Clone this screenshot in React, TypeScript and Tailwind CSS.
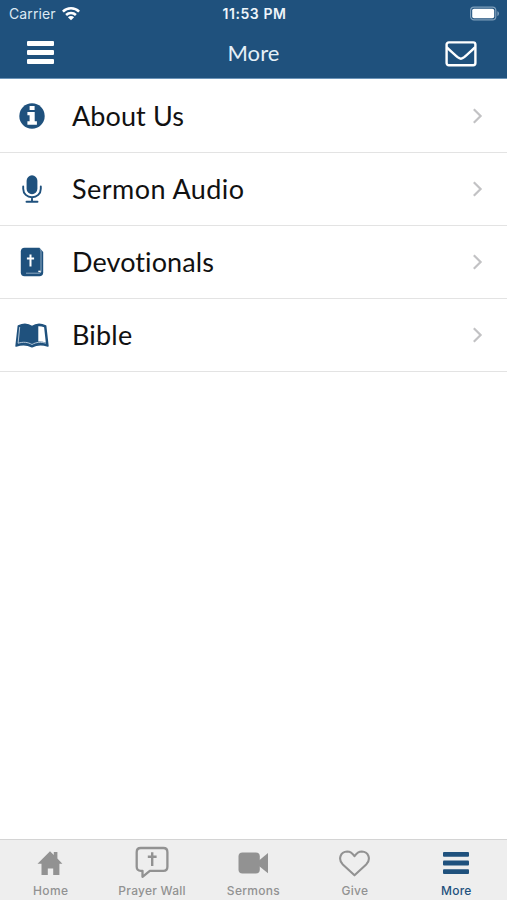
import type { ReactNode } from 'react';

interface MenuItem {
  label: string;
  icon: ReactNode;
  labelClass: string;
}

interface TabItem {
  label: string;
  icon: ReactNode;
  labelClass: string;
  active?: boolean;
}

const WifiIcon = () => (
  <svg width="20" height="16" viewBox="0 0 20 16" fill="none" stroke="currentColor" strokeWidth="2.5">
    <path d="M1.9 5.6a11.4 11.4 0 0 1 16.2 0" />
    <path d="M5.1 9a6.9 6.9 0 0 1 9.8 0" />
    <path d="M10 14.2 6.9 11.2a4.4 4.4 0 0 1 6.2 0Z" fill="currentColor" stroke="none" />
  </svg>
);

const BatteryIcon = () => (
  <svg width="31" height="16" viewBox="0 0 31 16" fill="none">
    <rect x="1.6" y="1.2" width="25.2" height="12.6" rx="3.4" stroke="#7f9fbb" strokeWidth="1.2" />
    <rect x="3.2" y="2.8" width="22" height="9.4" rx="1.8" fill="#fff" />
    <path d="M28.4 5.2c2.1.7 2.1 4 0 4.8Z" fill="#7f9fbb" />
  </svg>
);

const MailIcon = () => (
  <svg width="32" height="26" viewBox="0 0 32 26" fill="none" stroke="currentColor" strokeWidth="2.4" strokeLinejoin="round">
    <rect x="1.6" y="1.4" width="28.8" height="22.8" rx="2.2" />
    <path d="M1.6 6.2c3.5 3.6 7.5 6.8 11 10 2.3 2 4.3 2 6.6 0 3.5-3.2 7.5-6.4 11-10" />
  </svg>
);

const BarsIcon = ({ className }: { className: string }) => (
  <svg className={className} viewBox="0 0 27 23" preserveAspectRatio="none" fill="currentColor">
    <rect width="27" height="5" rx="1" />
    <rect y="9" width="27" height="5" rx="1" />
    <rect y="18" width="27" height="5" rx="1" />
  </svg>
);

const InfoIcon = () => (
  <svg width="26" height="26" viewBox="0 0 26 26">
    <circle cx="13" cy="13" r="12.7" fill="currentColor" />
    <path d="M10.6 3.1h5v4h-5zM8.4 9h7.3v9.2h2.2v3.5H8.4v-3.5h2.2v-5.9H8.4z" fill="#fff" />
  </svg>
);

const MicIcon = () => (
  <svg width="20" height="28" viewBox="0 0 20 28" fill="none" stroke="currentColor" strokeWidth="1.9" strokeLinecap="round">
    <rect x="4.6" y=".3" width="10.8" height="18.9" rx="5.4" fill="currentColor" stroke="none" />
    <path d="M1.2 11.5v2.3c0 5 3.9 8.5 8.8 8.5s8.8-3.5 8.8-8.5v-2.3M10 22.5v4.3M4.5 26.8h11" />
  </svg>
);

const HolyBookIcon = () => (
  <svg width="24" height="30" viewBox="0 0 24 30">
    <path d="M4.5.8h15l3.7 4.2v20.7c0 2.2-1.5 3.6-3.7 3.6h-15C2 29.3.8 27.7.8 25.5V4.5C.8 2.2 2.200.8 4.5.8Z" fill="currentColor" />
    <path d="M19.8 2.2c1 .6 1.2 1.4 1.2 2.8v18.5c0 1.9-.5 2.7-2 2.7H6" fill="none" stroke="#a9c0d4" strokeWidth=".8" />
    <path d="M18.3 24.4h2.4" stroke="#fff" strokeWidth="1.5" />
    <path d="M10.5 7.6v12M6.9 11.500h7.200" stroke="#fff" strokeWidth="2" />
  </svg>
);

const OpenBookIcon = () => (
  <svg width="34" height="25" viewBox="0 0 34 25" strokeLinejoin="round">
    <path
      d="M3.4 2.9C8 .7 13.2.9 17 3.7 20.8.9 26 .7 30.6 2.9L32.9 23c-5.8-1.9-11-1.7-15.9.7-4.9-2.4-10.1-2.6-15.9-.7Z"
      fill="currentColor"
      stroke="currentColor"
      strokeWidth="1.6"
    />
    <path d="M23.3 3.3c2-.1 4 .2 5.8.9l1.7 15.3c-2.4-.8-4.9-1.1-7.5-.9Z" fill="#fff" />
    <path
      d="M4.700 4 3.100 20.200c5-1.500 9.600-1.200 13.900 1.300 4.300-2.500 8.900-2.800 13.900-1.300"
      fill="none"
      stroke="#c3d3e1"
      strokeWidth=".9"
    />
  </svg>
);

const HomeIcon = () => (
  <svg width="28" height="26" viewBox="0 0 28 26" fill="currentColor">
    <path d="M13 1.2 16.8 5V2.1h3.6v6.5L25.400 13.700h-3V25h-6.200v-6.500h-5.400V25H4.500V13.700h-4Z" />
  </svg>
);

const PrayerIcon = () => (
  <svg width="34" height="34" viewBox="0 0 34 34" fill="none" stroke="currentColor" strokeLinejoin="round">
    <path d="M5.7 2h22.7c2.700 0 4 1.600 4 4.200v14.500c0 2.600-1.300 4.100-4 4.100H14.800l-7.300 6v-6H5.700c-2.600 0-4-1.500-4-4.100V6.200C1.700 3.600 3.100 2 5.700 2Z" strokeWidth="2.300" />
    <path d="M17.200 6.300v13.700M12.800 10.800h8.800" strokeWidth="2.400" />
  </svg>
);

const VideoIcon = () => (
  <svg width="31" height="22" viewBox="0 0 31 22" fill="currentColor">
    <rect x=".5" y=".5" width="21.3" height="21" rx="4" />
    <path d="M21 8.500 30 1v20.300l-9-7.200Z" />
  </svg>
);

const HeartIcon = () => (
  <svg width="31" height="27" viewBox="0 0 31 27" fill="none" stroke="currentColor" strokeWidth="2.1" strokeLinejoin="round">
    <path d="M15.500 25.300 3.800 14.500C-1.200 9.500 1.300 1.700 8.200 1.500c3.300 0 5.500 2 7.300 4.700 1.800-2.700 4-4.700 7.300-4.700 6.900.2 9.400 8 4.400 13Z" />
  </svg>
);

const ChevronIcon = () => (
  <svg width="11" height="16" viewBox="0 0 11 16" fill="none" stroke="#c2c2c4" strokeWidth="2.2">
    <path d="m1.800 1.200 6.800 6.800-6.800 6.800" />
  </svg>
);

const menuItems: MenuItem[] = [
  { label: 'About Us', icon: <InfoIcon />, labelClass: 'tracking-[0.1px]' },
  { label: 'Sermon Audio', icon: <MicIcon />, labelClass: 'tracking-[0.45px]' },
  { label: 'Devotionals', icon: <HolyBookIcon />, labelClass: 'tracking-[0.1px]' },
  { label: 'Bible', icon: <OpenBookIcon />, labelClass: 'tracking-[0.2px]' },
];

const tabs: TabItem[] = [
  { label: 'Home', icon: <HomeIcon />, labelClass: 'tracking-[0.4px]' },
  { label: 'Prayer Wall', icon: <PrayerIcon />, labelClass: 'tracking-[0.25px]' },
  { label: 'Sermons', icon: <VideoIcon />, labelClass: 'tracking-[0.3px]' },
  { label: 'Give', icon: <HeartIcon />, labelClass: 'tracking-[0.3px]' },
  { label: 'More', icon: <BarsIcon className="h-[22px] w-[26px]" />, labelClass: 'tracking-[0.2px]', active: true },
];

export default function App() {
  return (
    <div className="flex h-[900px] w-[507px] flex-col overflow-hidden bg-white">
      <header className="h-[79px] shrink-0 border-b border-[#6c94b8] bg-[#1f517d] text-white">
        {/* Status bar */}
        <div className="grid h-[27px] grid-cols-3 items-center pl-[9px] pr-[7px] font-['Inter',sans-serif] text-[14px]">
          <div className="flex items-center gap-[5px] text-[#dce9f3]">
            <span className="tracking-[0.1px]">Carrier</span>
            <span className="text-white">
              <WifiIcon />
            </span>
          </div>
          <div className="text-center text-[14px] font-semibold tracking-[0.55px] text-[#eef5fa]">11:53 PM</div>
          <div className="flex justify-end">
            <BatteryIcon />
          </div>
        </div>

        {/* Nav bar */}
        <div className="grid h-[51px] grid-cols-3 items-center px-[29px]">
          <button aria-label="Open menu" className="-ml-0.5">
            <BarsIcon className="h-[23px] w-[27px]" />
          </button>
          <h1 className="text-center font-['Lato',sans-serif] text-[22px] leading-7 tracking-[0.1px] text-[#e5f0f8]">More</h1>
          <button aria-label="Messages" className="flex justify-end pt-0.5 pr-px">
            <MailIcon />
          </button>
        </div>
      </header>

      <main className="grow pt-px">
        {menuItems.map((item) => (
          <a key={item.label} href="#" className="flex h-[73px] items-center border-b border-[#e3e3e3] pr-[24px]">
            <span className="flex w-16 shrink-0 justify-center text-[#1f517d]">{item.icon}</span>
            <span className={`ml-2 grow font-['Lato',sans-serif] text-[27px] text-[#111] ${item.labelClass}`}>{item.label}</span>
            <ChevronIcon />
          </a>
        ))}
      </main>

      <nav className="grid h-[61px] shrink-0 grid-cols-5 border-t border-[#d4d4d4] bg-[#eeeeee]">
        {tabs.map((tab) => (
          <a
            key={tab.label}
            href="#"
            className={`flex flex-col items-center ${tab.active ? 'text-[#1f517d]' : 'text-[#929292]'}`}
          >
            <span className="flex h-[46px] items-center">{tab.icon}</span>
            <span className={`font-['Inter',sans-serif] text-[12px] font-medium leading-[10px] whitespace-nowrap ${tab.labelClass}`}>
              {tab.label}
            </span>
          </a>
        ))}
      </nav>
    </div>
  );
}
